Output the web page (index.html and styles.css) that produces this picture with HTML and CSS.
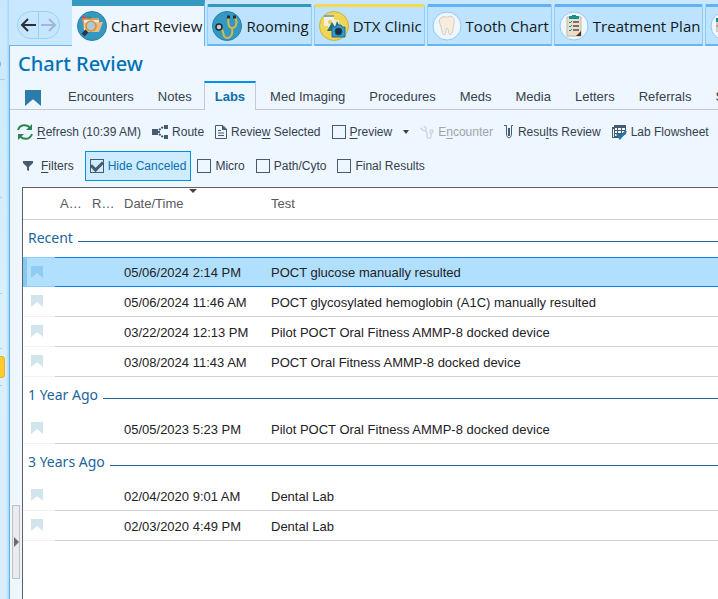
FILE: index.html
```html
<!DOCTYPE html>
<html lang="en">
<head>
<meta charset="utf-8">
<title>Chart Review</title>
<meta name="viewport" content="width=device-width, initial-scale=1">
<link rel="stylesheet" href="styles.css">
</head>
<body>
<svg class="defs" aria-hidden="true">
  <symbol id="flag" viewBox="0 0 12 12"><path d="M0 0H12V12L6 7L0 12Z" fill="currentColor"/></symbol>
</svg>
<div class="app">
  <aside class="rail">
    <i class="rail-dot"></i>
    <i class="rail-line"></i><i class="rail-line l2"></i><i class="rail-line l3"></i><i class="rail-line l4"></i><i class="rail-line l5"></i>
    <i class="rail-badge"></i>
  </aside>
  <div class="main">
    <header class="top">
      <div class="history">
        <button aria-label="Back"><svg width="16" height="14" viewBox="0 0 16 14"><path d="M16 7H2M8 1L2 7L8 13" fill="none" stroke="#2b2f35" stroke-width="2"/></svg></button>
        <button aria-label="Forward" class="fwd"><svg width="16" height="14" viewBox="0 0 16 14"><path d="M0 7H14M8 1L14 7L8 13" fill="none" stroke="#a3b5d8" stroke-width="2"/></svg></button>
      </div>
      <nav class="tabs">
        <a href="#" class="tab active">
          <svg width="30" height="30" viewBox="0 0 30 30"><circle cx="15" cy="15" r="14.5" fill="#3598c1" stroke="#2a7fa8"/><path d="M5 7H22V20H7Z" fill="#d39a5e"/><path d="M5 6.500H9" stroke="#dc3c6c" stroke-width="2"/><path d="M10 6.500H14" stroke="#3f8f5c" stroke-width="2"/><path d="M7 9H22V19H7Z" fill="#f6e6cf"/><path d="M7 12L26 11L22 21H8Z" fill="#ecbd83"/><circle cx="14" cy="15" r="5" fill="#a9cbd2" stroke="#d58f45" stroke-width="1.6"/><path d="M10 20L6 24" stroke="#26384a" stroke-width="4"/></svg>
          <span>Chart Review</span></a>
        <a href="#" class="tab teal">
          <svg width="30" height="30" viewBox="0 0 30 30"><circle cx="15" cy="15" r="14.500" fill="#3598c1" stroke="#2a7fa8"/><path d="M17 6C15 12 17 17 20 17C24 17 26 12 23 6M20 17C22 27 14 29 12 25C11 21 11 19 8 16" fill="none" stroke="#d3b84e" stroke-width="2"/><path d="M15 6H18M21 6H24" stroke="#222f39" stroke-width="3"/><circle cx="7" cy="16" r="3" fill="#c1cbd0" stroke="#242b32" stroke-width="1.5"/></svg>
          <span>Rooming</span></a>
        <a href="#" class="tab yellow">
          <svg width="30" height="30" viewBox="0 0 30 30"><circle cx="15" cy="15" r="14.500" fill="#f1d654" stroke="#cbb14a"/><path d="M5 5H15V15H5Z" fill="#f3f0dd"/><path d="M5 5H15" stroke="#8aa5b5" stroke-width="2"/><path d="M9 9H20V20H9Z" fill="#e5ede9"/><circle cx="11" cy="11" r="2" fill="#f2c94b"/><path d="M8 20L13 11L16 16L18 10L23 20Z" fill="#28725e"/><path d="M13 16H17L18 14H22L23 16H26V26H13Z" fill="#2f9bce" stroke="#256d96"/><circle cx="19.500" cy="20.500" r="3.500" fill="#1d2f40" stroke="#174f70"/></svg>
          <span>DTX Clinic</span></a>
        <a href="#" class="tab">
          <svg width="30" height="30" viewBox="0 0 30 30"><circle cx="15" cy="15" r="14" fill="#eef7ff" stroke="#8fcaf2"/><path d="M9 7C12 4 14 7 16 6C20 4 23 7 22 12C21 17 21 23 18 24C16 23 17 17 15 17C13 18 15 24 12 24C9 22 10 16 8 13C7 10 7 8 9 7Z" fill="#f8eddc" stroke="#d3cbc1"/></svg>
          <span>Tooth Chart</span></a>
        <a href="#" class="tab">
          <svg width="30" height="30" viewBox="0 0 30 30"><circle cx="15" cy="15" r="14" fill="#eef7ff" stroke="#8fcaf2"/><path d="M8 6H22V25H8Z" fill="#e9dfcc" stroke="#c5b7a0"/><path d="M22 20V25H17Z" fill="#54352b"/><path d="M10 5H13V4H17V5H20V8H10Z" fill="#15908d"/><path d="M10 11L11 12L13 10M10 15L11 16L13 14M10 19L11 20L13 18" fill="none" stroke="#15908d"/><path d="M14 11H20M14 15H20M14 19H20" stroke="#574d49" stroke-width="1.500"/></svg>
          <span>Treatment Plan</span></a>
        <a href="#" class="tab" aria-label="More activities">
          <svg width="30" height="30" viewBox="0 0 30 30"><circle cx="15" cy="15" r="14" fill="#eef7ff" stroke="#8fcaf2"/><path d="M6 8H24V21H6Z" fill="#d6cdbb"/><path d="M6 7H24V11H6Z" fill="#15908d"/><path d="M6 15H24M10 11V21" stroke="#8d8478"/></svg></a>
      </nav>
    </header>
    <main class="panel">
      <h1>Chart Review</h1>
      <nav class="subtabs">
        <a href="#" class="mark" aria-label="Bookmarks"><svg width="16" height="16"><use href="#flag"/></svg></a>
        <a href="#">Encounters</a><a href="#">Notes</a><a href="#" class="on">Labs</a><a href="#">Med Imaging</a><a href="#">Procedures</a><a href="#">Meds</a><a href="#">Media</a><a href="#">Letters</a><a href="#">Referrals</a><a href="#">Surgeries</a>
      </nav>
      <div class="toolbar">
        <button><svg width="16" height="16" viewBox="0 0 16 16" fill="none" stroke="#2f8552" stroke-width="2"><path d="M1 6C3 0 10 0 13 4M15 10C13 16 6 16 3 12"/><path d="M15 0V6H9ZM1 16V10H7Z" fill="#2f8552" stroke="none"/></svg><span><u>R</u>efresh (10:39 AM)</span></button>
        <button><svg width="16" height="16" viewBox="0 0 16 16"><path d="M0 5H6V11H0ZM12 1H16V5H12ZM12 11H16V15H12Z" fill="#465a70"/><path d="M11 3L7 6V10L11 13" fill="none" stroke="#465a70" stroke-width="2" stroke-dasharray="2 1"/></svg><span>Route</span></button>
        <button><svg width="12" height="14" viewBox="0 0 12 14"><path d="M.5.5H8L11.500 4V13.500H.5Z" fill="none" stroke="#465a70"/><path d="M7 0L12 5H7Z" fill="#465a70"/><path d="M3 5.500H6M3 8H9M3 10.500H9" stroke="#465a70"/></svg><span>Revie<u>w</u> Selected</span></button>
        <label class="check"><input type="checkbox"><span><u>P</u>review</span></label>
        <button class="caret" aria-label="Preview options"><svg width="6" height="4"><path d="M0 0H6L3 4Z" fill="#35414d"/></svg></button>
        <button class="off" disabled><svg width="14" height="14" viewBox="0 0 14 14" fill="none" stroke="#cdd8e2" stroke-width="1.500"><path d="M0 3L2 4C3 7 7 6 6 3L4 1M6 6L7 8V11C7 14 11 14 11 11V8"/><circle cx="11.500" cy="6.500" r="1.500"/></svg><span>E<u>n</u>counter</span></button>
        <button><svg width="10" height="14" viewBox="0 0 10 14" fill="none" stroke="#465a70"><path d="M0 .5H2.500V9C2.500 14 7.500 14 7.500 9V.5H9"/><path d="M5 3V11" stroke-width="2"/></svg><span>Resu<u>l</u>ts Review</span></button>
        <button><svg width="15" height="15" viewBox="0 0 15 15"><path d="M2 0H14V9L8 13H0V2H2Z" fill="#465a70"/><path d="M3 3H5V5H3ZM6 3H9V5H6ZM10 3H13V5H10ZM3 6H5V8H3ZM6 6H9V8H6ZM10 6H13V8H10ZM3 9H5V11H3ZM1 4H2V12H1Z" fill="#eef6ff"/><path d="M5 9L8 13L14 6" fill="none" stroke="#2379ad" stroke-width="2.500"/></svg><span>Lab Flowsheet</span></button>
      </div>
      <div class="filters">
        <button><svg width="10" height="10" viewBox="0 0 10 10"><path d="M0 0H10V2L6 6V10L4 9V6L0 2Z" fill="#465a70"/></svg><span><u>F</u>ilters</span></button>
        <label class="check picked"><input type="checkbox" checked><span>Hide Canceled</span></label>
        <label class="check"><input type="checkbox"><span>Micro</span></label>
        <label class="check"><input type="checkbox"><span>Path/Cyto</span></label>
        <label class="check"><input type="checkbox"><span>Final Results</span></label>
      </div>
      <div class="content">
        <div class="gutter"><button aria-label="Expand sidebar"><svg width="5" height="10"><path d="M0 0L5 5L0 10Z" fill="#6d6d6d"/></svg></button></div>
        <div class="grid">
          <table>
            <colgroup><col class="c-flag"><col class="c-a"><col class="c-r"><col class="c-date"><col></colgroup>
            <thead><tr><th></th><th>A…</th><th>R…</th><th class="sorted">Date/Time</th><th>Test</th></tr></thead>
            <tbody>
              <tr class="group"><th colspan="5"><div>Recent</div></th></tr>
              <tr class="sel"><td><svg width="12" height="12"><use href="#flag"/></svg></td><td></td><td></td><td>05/06/2024 2:14 PM</td><td>POCT glucose manually resulted</td></tr>
              <tr><td><svg width="12" height="12"><use href="#flag"/></svg></td><td></td><td></td><td>05/06/2024 11:46 AM</td><td>POCT glycosylated hemoglobin (A1C) manually resulted</td></tr>
              <tr><td><svg width="12" height="12"><use href="#flag"/></svg></td><td></td><td></td><td>03/22/2024 12:13 PM</td><td>Pilot POCT Oral Fitness AMMP-8 docked device</td></tr>
              <tr><td><svg width="12" height="12"><use href="#flag"/></svg></td><td></td><td></td><td>03/08/2024 11:43 AM</td><td>POCT Oral Fitness AMMP-8 docked device</td></tr>
            </tbody>
            <tbody>
              <tr class="group"><th colspan="5"><div>1 Year Ago</div></th></tr>
              <tr><td><svg width="12" height="12"><use href="#flag"/></svg></td><td></td><td></td><td>05/05/2023 5:23 PM</td><td>Pilot POCT Oral Fitness AMMP-8 docked device</td></tr>
            </tbody>
            <tbody>
              <tr class="group"><th colspan="5"><div>3 Years Ago</div></th></tr>
              <tr><td><svg width="12" height="12"><use href="#flag"/></svg></td><td></td><td></td><td>02/04/2020 9:01 AM</td><td>Dental Lab</td></tr>
              <tr><td><svg width="12" height="12"><use href="#flag"/></svg></td><td></td><td></td><td>02/03/2020 4:49 PM</td><td>Dental Lab</td></tr>
            </tbody>
          </table>
        </div>
      </div>
    </main>
  </div>
</div>
</body>
</html>
```
FILE: styles.css
```css
* { box-sizing: border-box; }
body {
  margin: 0;
  background: #c9e8ff;
  color: #35414d;
  font: 13px/16px "Liberation Sans", Arial, sans-serif;
  overflow: hidden;
}
a { color: inherit; text-decoration: none; }
button {
  padding: 0;
  border: 0;
  background: none;
  color: inherit;
  font: inherit;
}
svg { flex: none; display: block; }
u { text-underline-offset: 2px; }
.defs { position: absolute; width: 0; height: 0; }

.app { display: flex; height: 100vh; }
.rail {
  position: relative;
  flex: none;
  width: 9px;
  background: linear-gradient(90deg, transparent 6px, #a9d8f8), linear-gradient(#c9e8ff, #d8f0ff 50%, #d9eeff);
}
.rail-dot { position: absolute; left: -7px; top: 60px; width: 8px; height: 8px; border-radius: 50%; background: #70bff0; }
.rail-line { position: absolute; left: 0; top: 79px; width: 5px; height: 1px; background: #a9d0e8; }
.rail-line.l2 { top: 197px; width: 2px; }
.rail-line.l3 { top: 293px; width: 2px; }
.rail-line.l4 { top: 348px; width: 2px; }
.rail-line.l5 { top: 385px; width: 2px; }
.rail-badge {
  position: absolute;
  left: -4px;
  top: 356px;
  width: 9px;
  height: 22px;
  border: 1px solid #e5b32c;
  border-radius: 3px;
  background: #ffcb2e;
}

.main { flex: 1; min-width: 0; display: flex; flex-direction: column; }
.top {
  display: flex;
  height: 46px;
  background: linear-gradient(#6ab6ea, #6ab6ea) 0 100% / 63px 1px no-repeat;
}
.history {
  flex: none;
  display: flex;
  width: 43px;
  height: 28px;
  margin: 11px 12px 0 8px;
  border: 1px solid #9fd0f3;
  border-radius: 14px;
  background: #c4e6ff;
}
.history button { flex: 1; display: grid; place-items: center; }
.history .fwd { border-left: 1px solid #9fd0f3; }

.tabs { flex: 1; min-width: 0; display: flex; gap: 2px; overflow: hidden; }
.tab {
  flex: none;
  display: flex;
  align-items: center;
  gap: 4px;
  height: 42px;
  margin-top: 4px;
  padding: 0 2px 0 4px;
  border: 1px solid #8fcdfb;
  border-top: 3px solid #64b1f2;
  border-bottom: 2px solid #6ab6ea;
  border-radius: 2px 2px 0 0;
  background: #bde3ff;
  color: #101820;
  font: 15px/20px "Open Sans", "Noto Sans", sans-serif;
}
.tab.teal { border-top-color: #3598c1; }
.tab.yellow { border-top-color: #f3d850; }
.tab.active {
  height: 46px;
  margin-top: 0;
  padding-left: 5px;
  border: 0;
  border-top: 6px solid #3598c1;
  border-right: 1px solid #6ab6ea;
  background: #eef6ff;
  border-radius: 0;
}

.panel {
  flex: 1;
  min-height: 0;
  display: flex;
  flex-direction: column;
  border-left: 1px solid #5fb0e6;
  background: #eef6ff;
}
h1 {
  margin: 4px 8px 0;
  color: #0072b5;
  font: 500 20px/28px "Noto Sans", "Open Sans", sans-serif;
}
.subtabs {
  flex: none;
  display: flex;
  height: 29px;
  margin-top: 3px;
  overflow: hidden;
  box-shadow: inset 0 -1px #c6cad0;
}
.subtabs a {
  padding: 6px 11px 0;
  border: 1px solid transparent;
  border-top-width: 2px;
  border-bottom: 0;
  white-space: nowrap;
}
.subtabs .mark { padding: 7px 14px 0 14px; color: #2b7cab; }
.subtabs .on {
  margin-right: 2px;
  padding: 6px 10px 0;
  border-color: #0091ea #c6cad0;
  background: #eef6ff;
  color: #0b6fb0;
  font-weight: bold;
}

.toolbar, .filters {
  flex: none;
  display: flex;
  align-items: center;
  gap: 11px;
  font-size: 12px;
  white-space: nowrap;
}
.toolbar { height: 28px; margin-top: 8px; padding-left: 7px; }
.toolbar button, .filters button, .check { display: flex; align-items: center; gap: 4px; }
.toolbar .off { color: #a0a5ab; }
.filters { height: 30px; margin-top: 5px; padding-left: 13px; }
.filters button { gap: 8px; }
.check input {
  appearance: none;
  display: grid;
  place-items: center;
  width: 14px;
  height: 14px;
  margin: 0;
  border: 1px solid #465a70;
}
.check input:checked::before {
  content: "";
  width: 9px;
  height: 5px;
  margin-bottom: 3px;
  border: solid #465a70;
  border-width: 0 0 3px 3px;
  transform: rotate(-45deg);
}
.picked {
  height: 30px;
  margin-right: -5px;
  padding: 0 4px;
  border: 1px solid #0091dc;
  background: #cfecff;
  color: #0b6fb0;
}

.content { flex: 1; min-height: 0; display: flex; margin-top: 6px; }
.gutter { flex: none; width: 12px; padding: 318px 2px 0 2px; }
.gutter button {
  display: grid;
  place-items: center;
  width: 8px;
  height: 74px;
  border: 1px solid #bcbfc3;
  background: #ececee;
}
.grid { flex: 1; min-width: 0; border: 1px solid #5e6268; border-width: 1px 0 0 1px; background: #fff; }
table { width: 100%; border-collapse: separate; border-spacing: 0; table-layout: fixed; }
.c-flag { width: 32px; }
.c-a { width: 32px; }
.c-r { width: 32px; }
.c-date { width: 147px; }
th { padding: 0 5px; font-weight: normal; text-align: left; color: #56595d; white-space: nowrap; }
thead th { height: 32px; border-bottom: 1px solid #d0d2d4; }
.sorted { position: relative; }
.sorted::after {
  content: "";
  position: absolute;
  left: 70px;
  top: 1px;
  border: 4px solid transparent;
  border-top-color: #444;
  border-bottom: 0;
}
.group th { height: 37px; padding: 0 0 2px 5px; vertical-align: middle; }
.group div {
  display: flex;
  align-items: center;
  gap: 5px;
  color: #1d659c;
  font: 14px/20px "Noto Sans", "Open Sans", sans-serif;
}
.group div::after { content: ""; flex: 1; height: 1px; margin-top: 8px; background: #1d659c; }
td { height: 30px; padding: 2px 5px 0; border-bottom: 1px solid #ccd2d5; color: #1e2226; white-space: nowrap; }
td:first-child { padding: 8px 0 0 8px; border-color: #f3f3f3; color: #d2e4ec; vertical-align: top; }
.sel td { background: #b1dffe; border-top: 1px solid #0a80f0; border-bottom-color: #0a80f0; }
.sel td:first-child { border-color: #8cc9f3; box-shadow: inset 4px 0 #86c8f4; color: #92cbf0; }
```
